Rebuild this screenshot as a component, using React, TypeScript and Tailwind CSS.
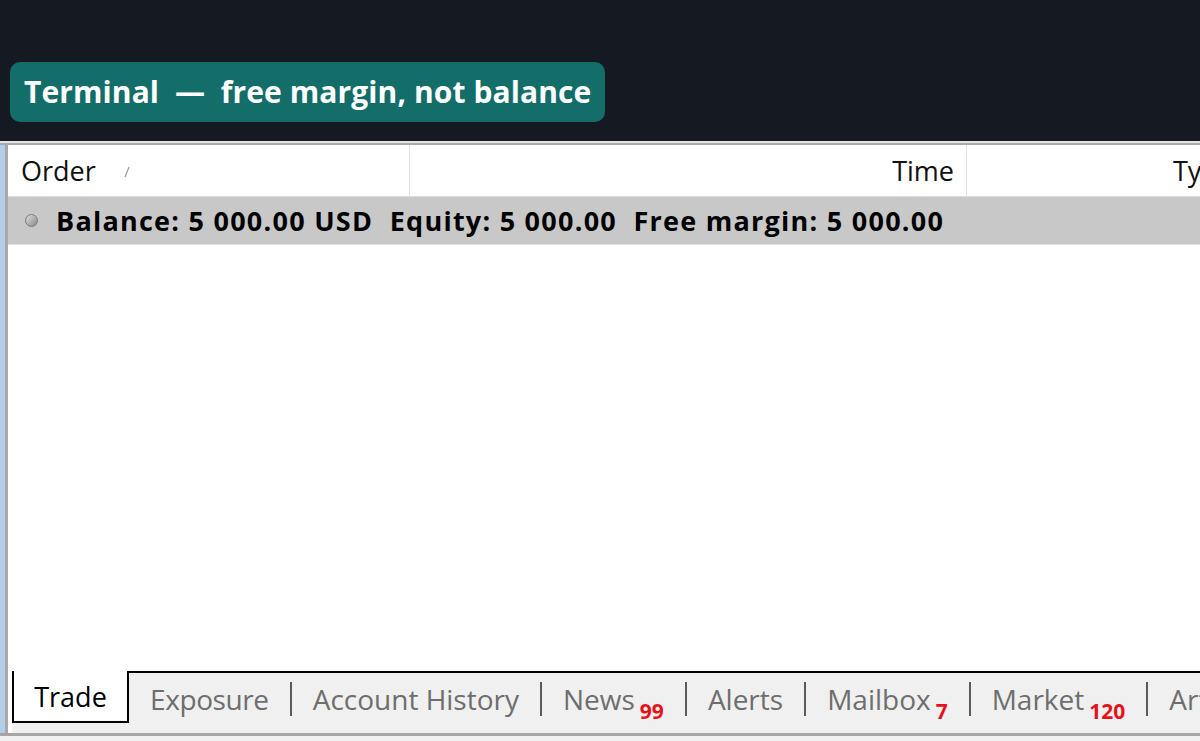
import React from "react";

const font = { fontFamily: '"Open Sans", "Noto Sans", "Liberation Sans", sans-serif' };

function Tab({ label, badge, last, tight }: { label: string; badge?: string; last?: boolean; tight?: boolean }) {
  return (
    <div className="flex items-center h-full shrink-0">
      <div className="flex items-end px-[21px] text-[#6e6e6e] text-[28px] leading-none whitespace-nowrap">
        <span className={tight ? "tracking-[-0.4px]" : ""}>{label}</span>
        {badge && (
          <span className="ml-[5px] text-[21px] font-bold text-[#e5121c] translate-y-[9px] leading-none">
            {badge}
          </span>
        )}
      </div>
      {!last && <div className="w-[2px] h-[34px] bg-[#5a5a5a] shrink-0" />}
    </div>
  );
}

export default function App() {
  return (
    <div className="w-[1200px] h-[741px] bg-[#151922] flex flex-col overflow-hidden" style={font}>
      <div className="h-[141px] shrink-0 pt-[62px] pl-[10px]">
        <div className="inline-flex items-center h-[60px] px-[14px] rounded-[10px] bg-[#136d68] text-white font-bold text-[30px] tracking-[0.1px] leading-none whitespace-pre">
          {"Terminal  —  free margin, not balance"}
        </div>
      </div>
      <div className="flex-1 flex flex-col bg-white">
        <div className="h-[2px] bg-[#e4e4e4]" />
        <div className="h-[2px] bg-[#a8a8a8]" />
        <div className="flex-1 flex">
          <div className="w-[5px] bg-[#b6cde9]" />
          <div className="w-[3px] bg-[#a9a9a9]" />
          <div className="flex-1 flex flex-col bg-white overflow-hidden">
            {/* header */}
            <div className="h-[52px] shrink-0 flex border-b border-[#dcdcdc] text-[27px] text-[#111] leading-none">
              <div className="w-[402px] shrink-0 flex items-center pl-[13px] border-r border-[#e2e2e2]">
                <span>Order</span>
                <svg width="8" height="12" viewBox="0 0 8 12" className="ml-[27px] mt-[2px]">
                  <line x1="2" y1="11" x2="6" y2="1" stroke="#9a9a9a" strokeWidth="1.2" />
                </svg>
              </div>
              <div className="w-[557px] shrink-0 flex items-center justify-end pr-[12px] border-r border-[#e2e2e2]">
                Time
              </div>
              <div className="w-[278px] shrink-0 flex items-center justify-end pr-[12px] whitespace-nowrap">Type</div>
            </div>
            {/* balance row */}
            <div className="h-[48px] shrink-0 flex items-center bg-[#c8c8c8] pl-[17px] border-b border-[#e0e0e0]">
              <div className="w-[13px] h-[13px] rounded-full border border-[#7a7a7a] bg-gradient-to-br from-[#dcdcdc] to-[#8a8a8a]" />
              <span className="ml-[18px] font-bold text-[27px] tracking-[1.25px] text-black leading-none whitespace-pre">
                {"Balance: 5 000.00 USD  Equity: 5 000.00  Free margin: 5 000.00"}
              </span>
            </div>
            <div className="flex-1" />
            {/* tab bar */}
            <div className="h-[62px] shrink-0 flex bg-[#f0f0f0] relative">
              <div className="w-[4px] bg-white" />
              <div className="w-[117px] shrink-0 bg-white border-l-2 border-r-2 border-b-2 border-black h-[52px] flex items-center justify-center text-[27px] text-black leading-none">
                Trade
              </div>
              <div className="flex-1 flex border-t-2 border-black h-full items-center overflow-hidden">
                <div className="flex items-center h-full -mt-[8px]">
                  <Tab label="Exposure" tight />
                  <Tab label="Account History" />
                  <Tab label="News" badge="99" />
                  <Tab label="Alerts" />
                  <Tab label="Mailbox" badge="7" />
                  <Tab label="Market" badge="120" />
                  <Tab label="Articles" last />
                </div>
              </div>
            </div>
          </div>
        </div>
        <div className="h-[3px] bg-[#a6a6a6]" />
        <div className="h-[5px] bg-[#f0f0f0]" />
      </div>
    </div>
  );
}
